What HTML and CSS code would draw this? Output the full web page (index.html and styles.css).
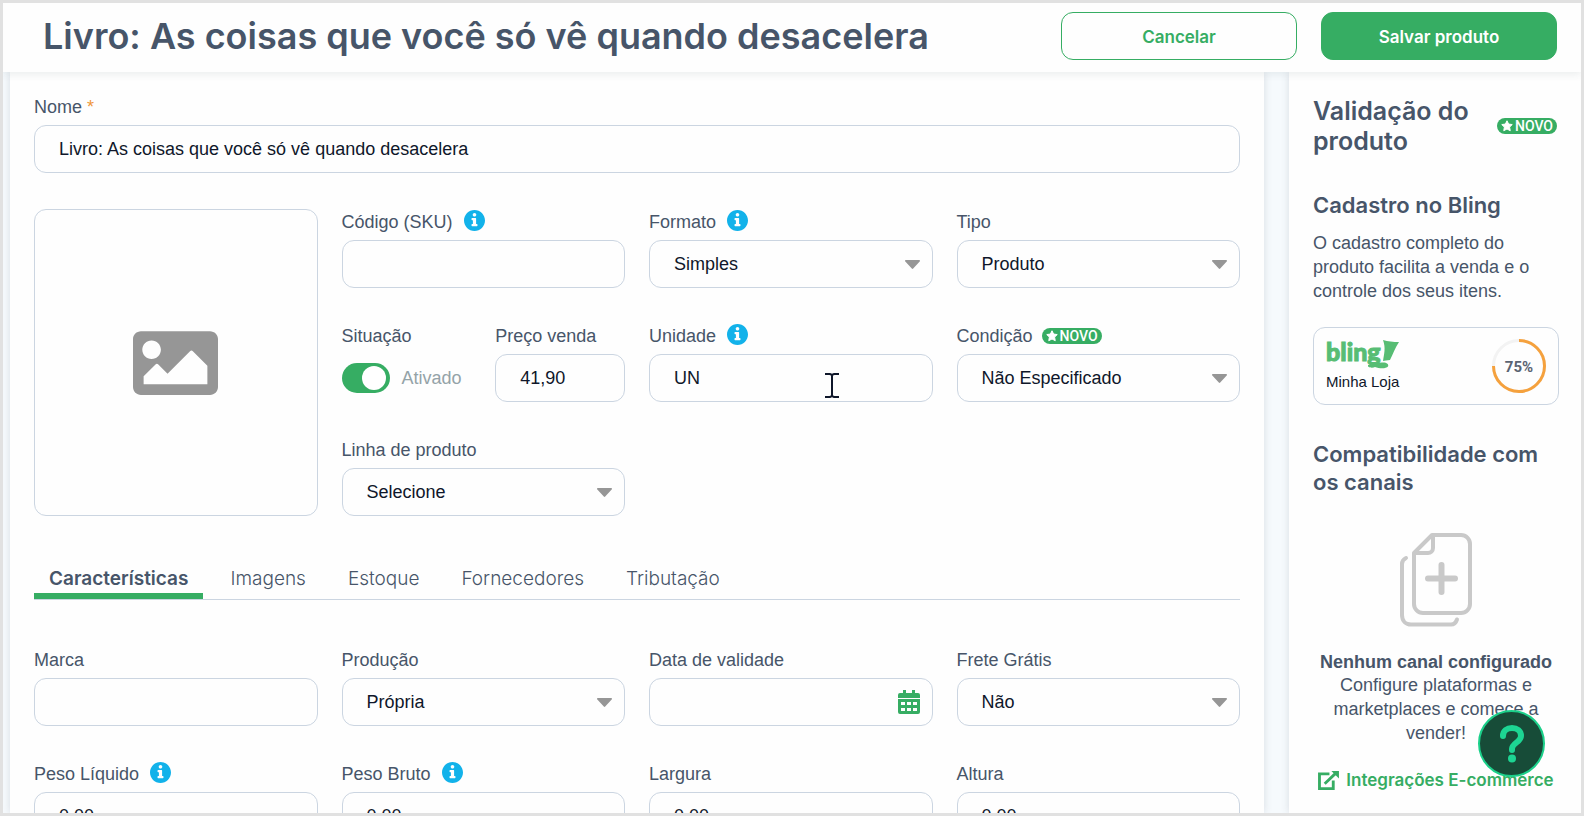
FILE: index.html
```html
<!DOCTYPE html>
<html lang="pt-BR">
<head>
<meta charset="utf-8">
<title>Livro: As coisas que você só vê quando desacelera</title>
<link rel="stylesheet" href="styles.css">
</head>
<body>
<svg class="sprite" aria-hidden="true">
  <symbol id="info" viewBox="8 8 496 496"><path d="M256 8C119.043 8 8 119.083 8 256c0 136.997 111.043 248 248 248s248-111.003 248-248C504 119.083 392.957 8 256 8zm0 70c23.196 0 42 18.804 42 42s-18.804 42-42 42-42-18.804-42-42 18.804-42 42-42zm70 304c0 6.627-5.373 12-12 12H198c-6.627 0-12-5.373-12-12v-34c0-6.627 5.373-12 12-12h20v-84h-20c-6.627 0-12-5.373-12-12v-34c0-6.627 5.373-12 12-12h84c6.627 0 12 5.373 12 12v130h20c6.627 0 12 5.373 12 12v34z"/></symbol>
  <symbol id="caret" viewBox="0 0 15 9"><path d="M1 0h13c.9 0 1.300 1 .7 1.600L8.200 8.600c-.4.4-1 .4-1.400 0L.3 1.600C-.3 1 .1 0 1 0z"/></symbol>
  <symbol id="star" viewBox="0 0 24 24"><path d="M12 1.500l3.200 6.600 7.300 1-5.300 5.100 1.300 7.200L12 18l-6.500 3.400 1.300-7.200L1.500 9.100l7.300-1z" stroke="currentColor" stroke-width="2" stroke-linejoin="round"/></symbol>
</svg>

<header class="topbar">
  <h1 class="topbar-title">Livro: As coisas que você só vê quando desacelera</h1>
  <div class="topbar-actions">
    <button type="button" class="btn btn-outline">Cancelar</button>
    <button type="submit" form="product" class="btn btn-solid">Salvar produto</button>
  </div>
</header>

<div class="workspace">
  <main class="panel form-panel">
    <form id="product" class="form">
      <div class="field">
        <label class="label" for="nome">Nome <span class="required">*</span></label>
        <input class="control" id="nome" type="text" value="Livro: As coisas que você só vê quando desacelera">
      </div>

      <div class="overview">
        <button type="button" class="photo" aria-label="Adicionar imagem">
          <svg class="photo-icon" viewBox="0 64 512 384"><path d="M464 448H48c-26.510 0-48-21.490-48-48V112c0-26.510 21.490-48 48-48h416c26.510 0 48 21.490 48 48v288c0 26.510-21.490 48-48 48zM112 120c-30.928 0-56 25.072-56 56s25.072 56 56 56 56-25.072 56-56-25.072-56-56-56zM64 384h384V272l-87.515-87.515c-4.686-4.686-12.284-4.686-16.971 0L208 320l-55.515-55.515c-4.686-4.686-12.284-4.686-16.971 0L64 336v48z"/></svg>
        </button>
        <div class="overview-fields">
          <div class="field">
            <label class="label" for="sku">Código (SKU) <svg class="info"><use href="#info"/></svg></label>
            <input class="control" id="sku" type="text">
          </div>
          <div class="field">
            <label class="label" for="formato">Formato <svg class="info"><use href="#info"/></svg></label>
            <div class="stack"><select class="control" id="formato"><option>Simples</option></select><svg class="caret"><use href="#caret"/></svg></div>
          </div>
          <div class="field">
            <label class="label" for="tipo">Tipo</label>
            <div class="stack"><select class="control" id="tipo"><option>Produto</option></select><svg class="caret"><use href="#caret"/></svg></div>
          </div>
          <div class="pair">
            <div class="field">
              <span class="label" id="situacao">Situação</span>
              <label class="switch"><input class="switch-box" type="checkbox" aria-labelledby="situacao" checked>Ativado</label>
            </div>
            <div class="field">
              <label class="label" for="preco">Preço venda</label>
              <input class="control" id="preco" type="text" value="41,90">
            </div>
          </div>
          <div class="field">
            <label class="label" for="unidade">Unidade <svg class="info"><use href="#info"/></svg></label>
            <div class="stack">
              <input class="control" id="unidade" type="text" value="UN">
              <svg class="pointer" viewBox="0 0 14 25"><path d="M0 1h5l2 1 2-1h5M0 24h5l2-1 2 1h5M7 2v21"/></svg>
            </div>
          </div>
          <div class="field">
            <label class="label label-badged" for="condicao">Condição <span class="badge"><svg class="badge-star"><use href="#star"/></svg>NOVO</span></label>
            <div class="stack"><select class="control" id="condicao"><option>Não Especificado</option></select><svg class="caret"><use href="#caret"/></svg></div>
          </div>
          <div class="field">
            <label class="label" for="linha">Linha de produto</label>
            <div class="stack"><select class="control" id="linha"><option>Selecione</option></select><svg class="caret"><use href="#caret"/></svg></div>
          </div>
        </div>
      </div>

      <div class="tabs" role="tablist">
        <button type="button" role="tab" class="tab tab-active" aria-selected="true">Características</button>
        <button type="button" role="tab" class="tab">Imagens</button>
        <button type="button" role="tab" class="tab">Estoque</button>
        <button type="button" role="tab" class="tab">Fornecedores</button>
        <button type="button" role="tab" class="tab">Tributação</button>
      </div>

      <div class="details">
        <div class="field">
          <label class="label" for="marca">Marca</label>
          <input class="control" id="marca" type="text">
        </div>
        <div class="field">
          <label class="label" for="producao">Produção</label>
          <div class="stack"><select class="control" id="producao"><option>Própria</option></select><svg class="caret"><use href="#caret"/></svg></div>
        </div>
        <div class="field">
          <label class="label" for="validade">Data de validade</label>
          <div class="stack">
            <input class="control" id="validade" type="text">
            <svg class="calendar" viewBox="0 0 22 24"><path d="M2 3h3V0h3v3h6V0h3v3h3a2 2 0 0 1 2 2v3H0V5a2 2 0 0 1 2-2z"/><path fill-rule="evenodd" d="M0 9h22v13a2 2 0 0 1-2 2H2a2 2 0 0 1-2-2zM3 12v3h4v-3zM9 12v3h4v-3zM15 12v3h4v-3zM3 18v3h4v-3zM9 18v3h4v-3zM15 18v3h4v-3z"/></svg>
          </div>
        </div>
        <div class="field">
          <label class="label" for="frete">Frete Grátis</label>
          <div class="stack"><select class="control" id="frete"><option>Não</option></select><svg class="caret"><use href="#caret"/></svg></div>
        </div>
        <div class="field">
          <label class="label" for="liquido">Peso Líquido <svg class="info"><use href="#info"/></svg></label>
          <input class="control" id="liquido" type="text" value="0,00">
        </div>
        <div class="field">
          <label class="label" for="bruto">Peso Bruto <svg class="info"><use href="#info"/></svg></label>
          <input class="control" id="bruto" type="text" value="0,00">
        </div>
        <div class="field">
          <label class="label" for="largura">Largura</label>
          <input class="control" id="largura" type="text" value="0,00">
        </div>
        <div class="field">
          <label class="label" for="altura">Altura</label>
          <input class="control" id="altura" type="text" value="0,00">
        </div>
      </div>
    </form>
  </main>

  <aside class="panel side-panel">
    <div class="side-head">
      <h2 class="side-title">Validação do produto</h2>
      <span class="badge"><svg class="badge-star"><use href="#star"/></svg>NOVO</span>
    </div>

    <section class="side-section">
      <h3 class="side-subtitle">Cadastro no Bling</h3>
      <p class="side-text">O cadastro completo do produto facilita a venda e o controle dos seus itens.</p>
      <div class="store">
        <div class="store-info">
          <svg class="store-logo" viewBox="0 0 74 30" role="img" aria-label="bling!"><text class="logo-text" x="0" y="21">bling</text><path d="M57 0c5 1.500 10 2 16 2-4 6-6 12-9 18-3 0-5 1-7 1 1-7 3-13 0-21zM42 25c4 0 10-3 15-2.500 4 0 6 2 5 4-2 2.500-9 2-13 .5-2 1-5 1-7-.5z"/></svg>
          <span class="store-name">Minha Loja</span>
        </div>
        <svg class="gauge" viewBox="0 0 54 54" role="img" aria-label="75%">
          <circle class="gauge-track" cx="27" cy="27" r="25.500"/>
          <path class="gauge-value" d="M27 1.500A25.500 25.500 0 1 1 1.500 27"/>
          <text class="gauge-text" x="27" y="33">75%</text>
        </svg>
      </div>
    </section>

    <section class="side-section">
      <h3 class="side-subtitle">Compatibilidade com os canais</h3>
      <div class="empty">
        <svg class="empty-icon" viewBox="0 0 72 94"><path d="M32 2h29a9 9 0 0 1 9 9v60a9 9 0 0 1-9 9H23a9 9 0 0 1-9-9V20zM33 2v13a5 5 0 0 1-5 5H14M6 25c-2 1-4 3-4 6v51c0 6 4 9.500 9 9.500h40c3 0 5-2 6-5"/><path class="plus" d="M41.500 32v27M28 45.500h27"/></svg>
        <strong class="empty-title">Nenhum canal configurado</strong>
        <p class="empty-text">Configure plataformas e marketplaces e comece a vender!</p>
        <a class="link" href="#"><svg class="link-icon" viewBox="0 0 22 20"><path d="M12 3H1.500v15.500h14.500V10M7 13.500L19 2"/><path class="arrow" d="M14 0h8v8z"/></svg>Integrações E-commerce</a>
      </div>
    </section>
  </aside>
</div>

<button type="button" class="help" aria-label="Ajuda">
  <svg class="help-icon" viewBox="0 0 24 38"><path d="M3 11c0-5 4-8 9-8s9 3 9 8c0 6-9 7-9 13v1"/><circle cx="12" cy="33.500" r="4"/></svg>
</button>
</body>
</html>
```

FILE: styles.css
```css
* {
  box-sizing: border-box;
}

:root {
  --green: #36ad63;
  --ink: #475569;
  --line: #cbd5e1;
  --surface: #fefefe;
  --display: Inter, "Liberation Sans", sans-serif;
  --text: "Liberation Sans", Arial, sans-serif;
}

body {
  display: flex;
  flex-direction: column;
  height: 100vh;
  margin: 0;
  border: 3px solid #e1e1e1;
  overflow: hidden;
  background: #f6fafd;
  color: var(--ink);
  font: 18px/24px var(--text);
}

h1, h2, h3, p {
  margin: 0;
}

button, input, select {
  font: inherit;
}

.sprite {
  position: absolute;
  width: 0;
  height: 0;
}

/* Top bar */
.topbar {
  position: relative;
  z-index: 1;
  display: flex;
  flex: none;
  align-items: center;
  justify-content: space-between;
  gap: 24px;
  padding: 9px 24px 12px 40px;
  background: var(--surface);
  box-shadow: 0 2px 8px rgba(50, 80, 80, 0.1);
}

.topbar-title {
  font: 600 36px/48px var(--display);
  white-space: nowrap;
}

.topbar-actions {
  display: flex;
  gap: 24px;
}

.btn {
  width: 236px;
  height: 48px;
  padding: 1px 0 0;
  border: 1px solid var(--green);
  border-radius: 12px;
  font: 600 17px/24px var(--display);
}

.btn-outline {
  background: var(--surface);
  color: var(--green);
}

.btn-solid {
  background: var(--green);
  color: #fff;
}

/* Panels */
.workspace {
  display: grid;
  flex: 1;
  grid-template-columns: minmax(0, 1fr) 292px;
  gap: 25px;
  min-height: 0;
  padding-left: 7px;
}

.panel {
  overflow: hidden;
  background: var(--surface);
  box-shadow: 0 0 8px rgba(60, 70, 90, 0.16);
}

.form-panel {
  padding: 23px 24px 0;
}

/* Fields */
.label {
  display: flex;
  gap: 11px;
  height: 24px;
  margin-bottom: 6px;
}

.label:has(.required) {
  gap: 5px;
}

.label-badged {
  align-items: center;
  gap: 9px;
}

.required {
  color: #f0973a;
}

.info {
  width: 21px;
  height: 21px;
  fill: #12b2ea;
}

.control {
  display: block;
  width: 100%;
  height: 48px;
  padding: 0 24px;
  border: 1px solid var(--line);
  border-radius: 12px;
  appearance: none;
  background: transparent;
  color: #0f172a;
}

.stack {
  position: relative;
  display: grid;
  align-items: center;
}

.stack > .control,
.stack > .caret,
.stack > .calendar {
  grid-area: 1 / 1;
}

.caret,
.calendar {
  justify-self: end;
  margin-right: 13px;
  pointer-events: none;
}

.caret {
  width: 15px;
  height: 9px;
  fill: #969696;
}

.calendar {
  width: 22px;
  height: 24px;
  fill: var(--green);
}

.pointer {
  position: absolute;
  top: 19px;
  right: 94px;
  width: 14px;
  height: 25px;
  fill: none;
  stroke: #0f172a;
  stroke-width: 2;
}

.overview,
.details {
  display: grid;
  grid-template-columns: repeat(4, minmax(0, 1fr));
  gap: 36px 24px;
}

.overview {
  margin-top: 36px;
}

.overview-fields {
  display: grid;
  grid-column: span 3;
  grid-template-columns: repeat(3, minmax(0, 1fr));
  gap: 36px 24px;
  padding-top: 1px;
}

.pair {
  display: grid;
  grid-template-columns: 1fr 1fr;
  gap: 24px;
}

.pair > .field {
  min-width: 0;
}

.photo {
  display: grid;
  place-items: center;
  padding: 0;
  border: 1px solid var(--line);
  border-radius: 12px;
  background: transparent;
}

.photo-icon {
  width: 85px;
  height: 64px;
  fill: #969696;
}

.switch {
  display: flex;
  align-items: center;
  gap: 12px;
  height: 48px;
  color: #94a3a8;
}

.switch-box {
  display: flex;
  flex: none;
  justify-content: flex-end;
  width: 48px;
  height: 30px;
  margin: 0;
  padding: 3px 4px;
  border-radius: 15px;
  appearance: none;
  background: var(--green);
}

.switch-box::before {
  width: 24px;
  height: 24px;
  border-radius: 50%;
  background: #fff;
  content: "";
}

.badge {
  display: inline-flex;
  flex: none;
  align-items: center;
  justify-content: center;
  gap: 2px;
  width: 60px;
  height: 16px;
  border-radius: 8px;
  background: var(--green);
  color: #fff;
  font: 500 14px/16px Roboto, sans-serif;
}

.badge-star {
  width: 12px;
  height: 12px;
  fill: currentColor;
}

/* Tabs */
.tabs {
  display: flex;
  gap: 12px;
  margin: 36px 0 48px;
  border-bottom: 1px solid var(--line);
}

.tab {
  height: 47px;
  padding: 12px 15px 0;
  border: 0;
  border-bottom: 6px solid transparent;
  background: none;
  color: var(--ink);
  font: 300 19px/24px var(--display);
}

.tab-active {
  border-color: var(--green);
  font-weight: 600;
}

/* Side panel */
.side-panel {
  padding: 24px 24px 0;
}

.side-head {
  display: flex;
  align-items: center;
  justify-content: space-between;
  gap: 12px;
}

.side-title {
  font: 600 25px/30px var(--display);
}

.side-section {
  margin-top: 35px;
}

.side-subtitle {
  font: 600 22px/28px var(--display);
}

.side-text {
  margin-top: 12px;
}

.store {
  display: flex;
  align-items: center;
  justify-content: space-between;
  margin: 24px -2px 0 0;
  padding: 11px 12px;
  border: 1px solid var(--line);
  border-radius: 12px;
}

.store-info {
  display: flex;
  flex-direction: column;
  gap: 2px;
}

.store-logo {
  width: 74px;
  height: 30px;
  overflow: visible;
  fill: #57bd74;
}

.logo-text {
  font: 900 25px/30px Lato, sans-serif;
  stroke: #57bd74;
  stroke-width: 1;
}

.store-name {
  color: #0f172a;
  font-size: 15px;
  line-height: 20px;
}

.gauge {
  width: 54px;
  height: 54px;
  fill: none;
  stroke-width: 3;
}

.gauge-track {
  stroke: #f3f3f3;
}

.gauge-value {
  stroke: #f5a13d;
}

.gauge-text {
  fill: #5b6473;
  font: 700 15px Roboto, sans-serif;
  text-anchor: middle;
}

.empty {
  display: flex;
  flex-direction: column;
  align-items: center;
  margin: 37px -2px 0 0;
  text-align: center;
}

.empty-icon {
  width: 72px;
  height: 94px;
  fill: none;
  stroke: #c9c9c9;
  stroke-linecap: round;
  stroke-linejoin: round;
  stroke-width: 4;
}

.plus {
  stroke-width: 6;
}

.empty-title {
  margin-top: 24px;
  line-height: 22px;
  white-space: nowrap;
}

.link {
  display: flex;
  align-items: center;
  gap: 7px;
  margin-top: 23px;
  color: var(--green);
  font: 600 17px/24px var(--display);
  text-decoration: none;
  white-space: nowrap;
}

.link-icon {
  flex: none;
  width: 21px;
  height: 19px;
  fill: none;
  stroke: currentColor;
  stroke-width: 3;
}

.arrow {
  fill: currentColor;
  stroke: none;
}

/* Floating help */
.help {
  position: fixed;
  right: 39px;
  bottom: 39px;
  z-index: 2;
  display: grid;
  place-items: center;
  width: 67px;
  height: 67px;
  padding: 0;
  border: 2px solid #1bd08a;
  border-radius: 50%;
  background: #174c38;
}

.help-icon {
  width: 24px;
  height: 38px;
  fill: none;
  stroke: #1dd593;
  stroke-linecap: round;
  stroke-width: 6;
}

.help-icon circle {
  fill: #1dd593;
  stroke: none;
}
```
